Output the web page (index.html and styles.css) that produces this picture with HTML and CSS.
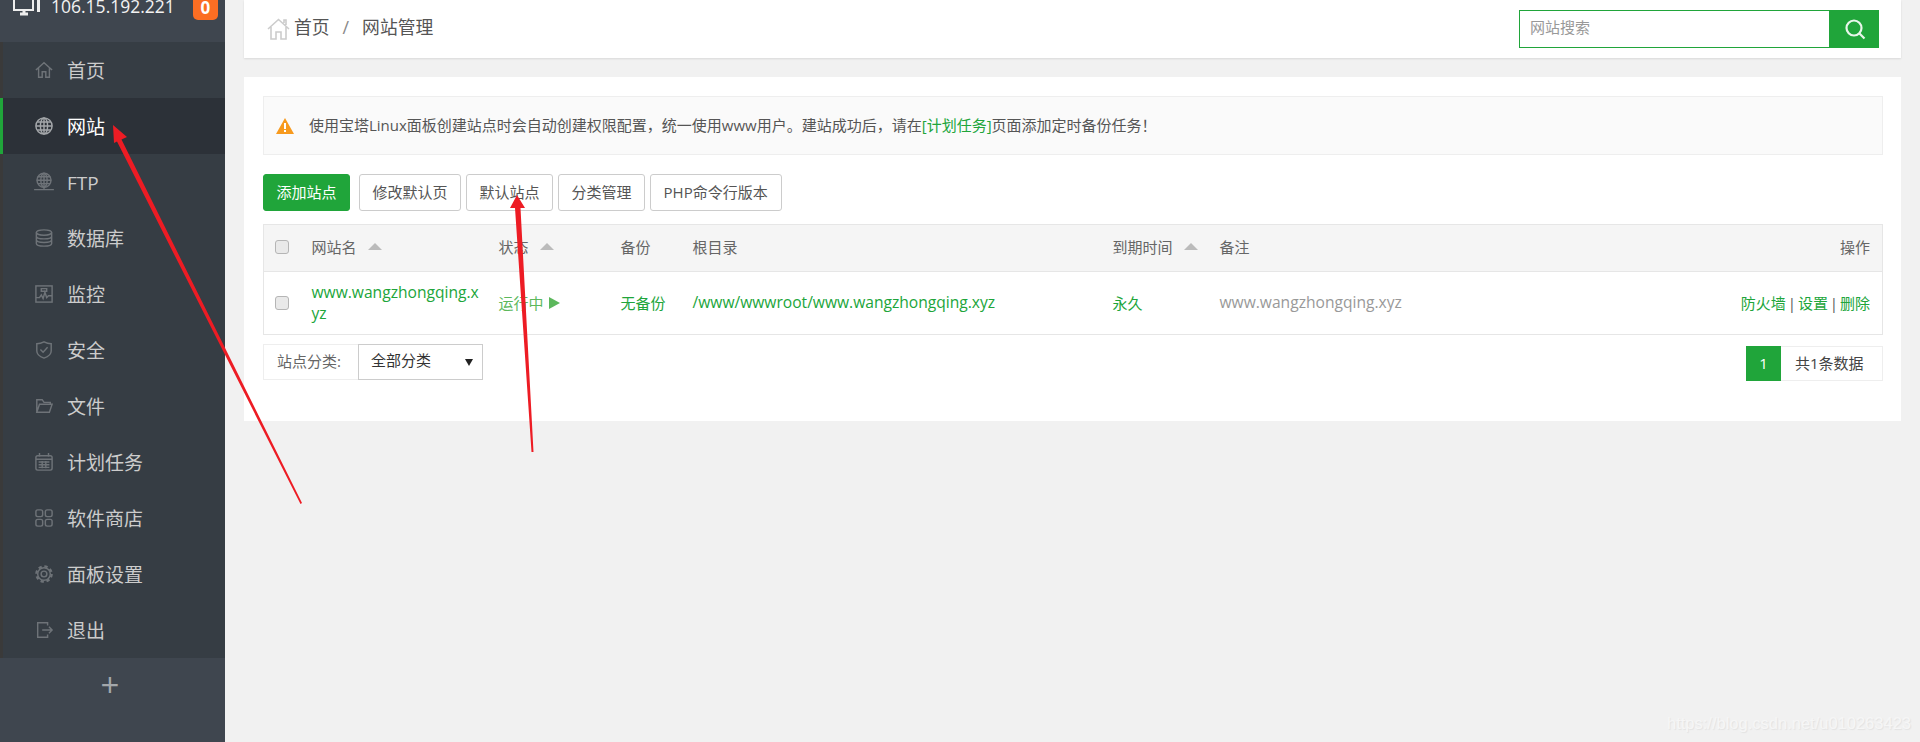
FILE: index.html
```html
<!DOCTYPE html>
<html lang="zh-CN">
<head>
    <meta http-equiv="Content-Type" content="text/html; charset=utf-8"/>
    <title>网站管理</title>
    <link rel="stylesheet" href="styles.css">
</head>
<body>
<div class="sidebar">
    <div class="server">
        <svg class="server_icon" width="28" height="20" viewBox="0 0 28 20" fill="none" stroke="#eee" stroke-width="2">
            <rect x="1" y="-6" width="19" height="20"/>
            <path d="M7 18h8M11 14v4" stroke-width="3"/>
            <rect x="24" y="-2" width="3" height="18" fill="#eee" stroke="none"/>
        </svg>
        <span class="server_ip">106.15.192.221</span>
        <span class="badge">0</span>
    </div>
    <ul class="menu">
        <li class="menu_item">
            <svg class="menu_icon" viewBox="0 0 20 20"><path d="M1 10 10 2l9 8M4 8v10h4v-6h4v6h4V8"/></svg>
            <span>首页</span>
        </li>
        <li class="menu_item active">
            <svg class="menu_icon" viewBox="0 0 20 20"><circle cx="10" cy="10" r="9"/><ellipse cx="10" cy="10" rx="4" ry="9"/><path d="M10 1v18M1 10h18M2.500 5.500h15M2.500 14.500h15"/></svg>
            <span>网站</span>
        </li>
        <li class="menu_item">
            <svg class="menu_icon" viewBox="0 0 20 20"><circle cx="10" cy="8" r="7.800"/><ellipse cx="10" cy="8" rx="3.500" ry="7.800"/><path d="M10 0v16M2 8h16M3 4.200h14M3 11.800h14M-1 18.500h22M10 16v2.500"/></svg>
            <span>FTP</span>
        </li>
        <li class="menu_item">
            <svg class="menu_icon" viewBox="0 0 20 20"><ellipse cx="10" cy="4" rx="8.500" ry="3"/><path d="M1.500 4v12c0 1.700 3.800 3 8.500 3s8.500-1.300 8.500-3V4M1.500 8c0 1.700 3.800 3 8.500 3s8.500-1.300 8.500-3M1.500 12c0 1.700 3.800 3 8.500 3s8.500-1.300 8.500-3"/></svg>
            <span>数据库</span>
        </li>
        <li class="menu_item">
            <svg class="menu_icon" viewBox="0 0 20 20"><rect x="1" y="1" width="18" height="18"/><path d="M1 14h4l2-3 2 4 2-7 2 6 2-2h4M7 4h6v3H7z"/></svg>
            <span>监控</span>
        </li>
        <li class="menu_item">
            <svg class="menu_icon" viewBox="0 0 20 20"><path d="M10 1c3 1.500 5 2 8 2v8c0 4-4 6.500-8 8-4-1.500-8-4-8-8V3c3 0 5-.5 8-2z"/><path d="m6 9.500 3 3 5-5.500"/></svg>
            <span>安全</span>
        </li>
        <li class="menu_item">
            <svg class="menu_icon" viewBox="0 0 20 20"><path d="M2 17V3h6l2 3h7v2M2 17h14l3-9H5z"/></svg>
            <span>文件</span>
        </li>
        <li class="menu_item">
            <svg class="menu_icon" viewBox="0 0 20 20"><rect x="1" y="3" width="18" height="16" rx="2"/><path d="M5 0v4M15 0v4M1 7h18M4 10h12M4 13h12M4 16h12M8 9v8M12 9v8"/></svg>
            <span>计划任务</span>
        </li>
        <li class="menu_item">
            <svg class="menu_icon" viewBox="0 0 20 20"><rect x="1" y="1" width="7.500" height="7.500" rx="2"/><rect x="11.500" y="1" width="7.500" height="7.500" rx="2"/><rect x="1" y="11.500" width="7.500" height="7.500" rx="2"/><rect x="11.500" y="11.500" width="7.500" height="7.500" rx="2"/></svg>
            <span>软件商店</span>
        </li>
        <li class="menu_item">
            <svg class="menu_icon" viewBox="0 0 20 20"><circle cx="10" cy="10" r="3.200"/><circle cx="10" cy="10" r="7"/><circle class="gear_teeth" cx="10" cy="10" r="8.500"/></svg>
            <span>面板设置</span>
        </li>
        <li class="menu_item">
            <svg class="menu_icon" viewBox="0 0 20 20"><path d="M14 5V2H3v16h11v-3M8 10h11M15.500 6.500 19 10l-3.500 3.500"/></svg>
            <span>退出</span>
        </li>
    </ul>
    <div class="sidebar_add">+</div>
</div>

<div class="main">
    <div class="card topbar">
        <div class="crumbs">
            <svg class="crumb_home" width="23" height="22" viewBox="0 0 23 22" fill="none" stroke="#ccc" stroke-width="1.600"><path d="M1 11 11.500 1.500 22 11M4 9v12h5v-7h5v7h5V9M17 5V2h2v5"/></svg>
            <span class="crumb_text">首页</span>
            <span class="crumb_sep">/</span>
            <span class="crumb_text">网站管理</span>
        </div>
        <div class="search">
            <div class="search_input">网站搜索</div>
            <div class="search_btn">
                <svg width="22" height="22" viewBox="0 0 22 22" fill="none" stroke="#e8f6ea" stroke-width="2.200"><circle cx="10" cy="10" r="7.500"/><path d="m15.500 15.500 5 5"/></svg>
            </div>
        </div>
    </div>

    <div class="card content">
        <div class="alert">
            <svg class="alert_icon" width="18" height="16" viewBox="0 0 18 16"><path d="M9 0 18 16H0z" fill="#f79a1e"/><rect x="8" y="5" width="2" height="6" fill="#fff"/><rect x="8" y="12" width="2" height="2" fill="#fff"/></svg>
            <span>使用宝塔Linux面板创建站点时会自动创建权限配置，统一使用www用户。建站成功后，请在<a class="green">[计划任务]</a>页面添加定时备份任务！</span>
        </div>

        <div class="btns">
            <div class="btn btn_green">添加站点</div>
            <div class="btn btn_add">修改默认页</div>
            <div class="btn">默认站点</div>
            <div class="btn">分类管理</div>
            <div class="btn btn_php">PHP命令行版本</div>
        </div>

        <table class="sites">
            <colgroup>
                <col class="col_check">
                <col class="col_name">
                <col class="col_status">
                <col class="col_backup">
                <col class="col_path">
                <col class="col_expire">
                <col class="col_note">
                <col>
            </colgroup>
            <thead>
                <tr>
                    <th><input class="check" type="checkbox"></th>
                    <th>网站名<span class="sort"></span></th>
                    <th>状态<span class="sort"></span></th>
                    <th>备份</th>
                    <th>根目录</th>
                    <th>到期时间<span class="sort"></span></th>
                    <th>备注</th>
                    <th class="op">操作</th>
                </tr>
            </thead>
            <tbody>
                <tr>
                    <td><input class="check" type="checkbox"></td>
                    <td class="green latin site_name">www.wangzhongqing.xyz</td>
                    <td class="running">运行中 <span class="play"></span></td>
                    <td class="green">无备份</td>
                    <td class="green latin">/www/wwwroot/www.wangzhongqing.xyz</td>
                    <td class="green">永久</td>
                    <td class="note latin">www.wangzhongqing.xyz</td>
                    <td class="op"><a class="green">防火墙</a> | <a class="green">设置</a> | <a class="green">删除</a></td>
                </tr>
            </tbody>
        </table>

        <div class="table_foot">
            <div class="filter">
                <div class="filter_label">站点分类:</div>
                <div class="filter_select">全部分类<span class="caret"></span></div>
            </div>
            <div class="pager">
                <div class="page_now">1</div>
                <div class="page_total">共1条数据</div>
            </div>
        </div>
    </div>
</div>

<!-- red annotation arrows drawn over the page -->
<svg class="marks" width="1920" height="742" viewBox="0 0 1920 742">
    <path fill="#ed1c24" d="M113 125 127 137 121.500 139.500 302 503 300.500 504 117 141.500 114 143z"/>
    <path fill="#ed1c24" d="M517 195 525 208 520.500 208 533.500 452 531.500 452 515 208 510 208z"/>
</svg>
<div class="watermark">https://blog.csdn.net/u010263423</div>
</body>
</html>
```

FILE: styles.css
```css
* {
    box-sizing: border-box;
}

html, body {
    height: 100%;
}

body {
    margin: 0;
    display: flex;
    overflow: hidden;
    position: relative;
    background: #f1f1f1;
    color: #555;
    font: 15px/1.4 "Open Sans", "Noto Sans CJK SC", sans-serif;
}

a {
    text-decoration: none;
}

.green {
    color: #20a53a;
}

.latin {
    font-size: 15.600px;
}

/* sidebar */
.sidebar {
    width: 225px;
    flex: none;
    display: flex;
    flex-direction: column;
    background: #3f464f;
}

.server {
    height: 42px;
    display: flex;
    align-items: flex-start;
    color: #f2f2f2;
    font-size: 17.500px;
    padding-left: 13px;
}

.server_icon {
    flex: none;
    margin-top: -4px;
}

.server_ip {
    margin: -7px 0 0 10px;
    line-height: 26px;
}

.badge {
    width: 25px;
    height: 20px;
    margin-left: 18px;
    border-radius: 0 0 5px 5px;
    background: #fb6e23;
    color: #fff;
    font-weight: bold;
    font-size: 17px;
    line-height: 15px;
    text-align: center;
}

.menu {
    list-style: none;
    margin: 0;
    padding: 0;
    background: #363d44;
    border-left: 3px solid #3a3a3a;
}

.menu_item {
    height: 56px;
    display: flex;
    align-items: center;
    gap: 14px;
    padding-left: 32px;
    color: #ccc;
    font-size: 19px;
}

.menu_item span {
    padding-top: 3px;
}

.menu_item.active {
    margin-left: -3px;
    border-left: 3px solid #20a53a;
    background: #2c3138;
    color: #fff;
}

.menu_icon {
    width: 18px;
    height: 18px;
    overflow: visible;
    fill: none;
    stroke: #6e7378;
    stroke-width: 1.600;
}

.active .menu_icon {
    stroke: #a4a7aa;
}

.gear_teeth {
    stroke-width: 2.500;
    stroke-dasharray: 3.700 3;
}

.sidebar_add {
    padding-right: 5px;
    color: #a3a7ab;
    font-size: 33px;
    line-height: 54px;
    text-align: center;
}

/* main column */
.main {
    flex: 1;
    min-width: 0;
    padding: 0 19px;
}

.card {
    background: #fff;
    box-shadow: 0 1px 2px rgba(0, 0, 0, 0.1);
}

.topbar {
    height: 58px;
    display: flex;
    align-items: center;
    justify-content: space-between;
    padding: 0 22px 0 23px;
}

.crumbs {
    display: flex;
    align-items: center;
    font-size: 17.800px;
}

.crumb_text {
    margin-bottom: 3px;
}

.crumb_home {
    margin-right: 4px;
}

.crumb_sep {
    margin: 0 13px 3px;
    color: #888;
}

.search {
    display: flex;
    width: 360px;
    height: 38px;
}

.search_input {
    flex: 1;
    border: 1px solid #20a53a;
    padding-left: 10px;
    color: #999;
    line-height: 33px;
}

.search_btn {
    width: 49px;
    display: flex;
    align-items: center;
    justify-content: center;
    background: #20a53a;
}

.content {
    height: 344px;
    margin-top: 19px;
    padding: 19px 18px 0 19px;
    box-shadow: none;
}

.alert {
    height: 59px;
    display: flex;
    align-items: center;
    padding-left: 12px;
    border: 1px solid #eee;
    background: #fafafa;
}

.alert_icon {
    margin-right: 15px;
}

.btns {
    display: flex;
    gap: 5px;
    margin-top: 19px;
}

.btn {
    height: 37px;
    padding: 0 12.500px;
    border: 1px solid #ccc;
    border-radius: 3px;
    line-height: 34px;
    background: #fff;
}

.btn_green {
    width: 87px;
    border-color: #20a53a;
    background: #20a53a;
    color: #fff;
    text-align: center;
    padding: 0;
}

.btn_add {
    margin-left: 4px;
}

.btn_php {
    width: 132px;
}

/* site list */
.sites {
    width: 100%;
    margin-top: 13px;
    border-collapse: collapse;
    table-layout: fixed;
    border: 1px solid #e6e6e6;
}

.col_check { width: 36px; }
.col_name { width: 187px; }
.col_status { width: 122px; }
.col_backup { width: 72px; }
.col_path { width: 420px; }
.col_expire { width: 107px; }
.col_note { width: 300px; }

.sites th {
    height: 47px;
    padding: 0 12px 2px;
    background: #f5f5f5;
    border-bottom: 1px solid #e6e6e6;
    color: #666;
    font-weight: normal;
    text-align: left;
    white-space: nowrap;
}

.sites td {
    height: 63px;
    padding: 0 12px;
}

.sites .op {
    text-align: right;
    word-spacing: -2px;
}

.check {
    appearance: none;
    display: block;
    width: 14px;
    height: 14px;
    margin: 0 0 0 -1px;
    border: 1px solid #b5b5b5;
    border-radius: 3px;
    background: #e9e9e9;
}

.sort {
    display: inline-block;
    margin-left: 11px;
    vertical-align: 3px;
    border: 7px solid transparent;
    border-top: 0;
    border-bottom-color: #bbb;
}

.sites .site_name {
    padding-right: 6px;
    word-break: break-all;
    line-height: 21px;
}

.running {
    color: #5cb85c;
}

.play {
    display: inline-block;
    margin-left: 2px;
    border: 6px solid transparent;
    border-right: 0;
    border-left: 11px solid #5cb85c;
}

.note {
    color: #999;
    white-space: nowrap;
}

.table_foot {
    display: flex;
    justify-content: space-between;
    margin-top: 9px;
}

.filter {
    display: flex;
    height: 36px;
}

.filter_label {
    width: 95px;
    padding-left: 13px;
    border: 1px solid #eee;
    border-right: 0;
    line-height: 32px;
    color: #666;
}

.filter_select {
    width: 125px;
    display: flex;
    align-items: center;
    justify-content: space-between;
    padding: 0 9px 3px 12px;
    border: 1px solid #ccc;
    color: #333;
}

.caret {
    margin-top: 3px;
    border: 4px solid transparent;
    border-bottom: 0;
    border-top: 7px solid #222;
}

.pager {
    display: flex;
    height: 35px;
    margin-top: 2px;
}

.page_now {
    width: 35px;
    background: #20a53a;
    color: #fff;
    line-height: 35px;
    text-align: center;
}

.page_total {
    width: 102px;
    padding-left: 14px;
    border: 1px solid #eee;
    border-left: 0;
    line-height: 33px;
    color: #444;
}

/* overlays */
.marks {
    position: absolute;
    left: 0;
    top: 0;
    pointer-events: none;
}

.watermark {
    position: absolute;
    right: 9px;
    bottom: 9px;
    color: #f6f6f6;
    font: 16.500px "Liberation Sans", sans-serif;
    text-shadow: 1px 1px 1px #e2e2e2;
}
```
